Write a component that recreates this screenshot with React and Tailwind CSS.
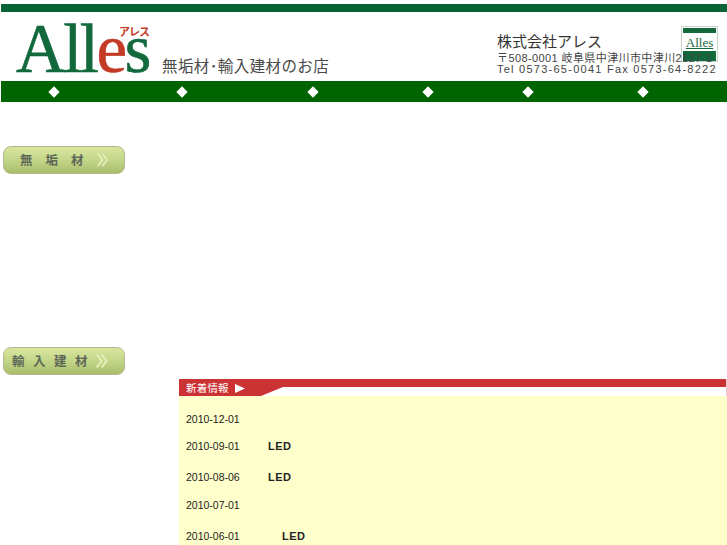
import React from 'react'

const jp = { fontFamily: '"Liberation Sans", "Noto Sans CJK JP", sans-serif' }

const Diamond = () => <span className="block w-[8px] h-[8px] rotate-45 bg-white" />

const SideButton = ({ chars, gap }) => (
  <div className={`w-[122px] h-[28px] ml-[3px] flex items-center rounded-[8px] border border-[#b5b98a] bg-gradient-to-b from-[#d9e6a0] via-[#c3d688] to-[#a9bd6c] ${gap}`}>
    {chars.map((c) => (
      <span key={c} className="pt-[2px] text-[12.5px] font-bold leading-none text-[#5f6858]">{c}</span>
    ))}
    <svg className="ml-auto mr-[15px]" width="16" height="18" viewBox="0 0 16 18" fill="none" stroke="#e2eeb8" strokeWidth="2.5">
      <path d="M1 1l6 8-6 8" />
      <path d="M7 1l6 8-6 8" />
    </svg>
  </div>
)

const NewsRow = ({ date, text, indent, height }) => (
  <div className={`flex items-center ${height}`}>
    <span className="w-[82px] text-[10.5px] leading-none text-[#222]">{date}</span>
    {text && <span className={`text-[11px] font-bold leading-none tracking-[0.5px] text-[#222] ${indent}`}>{text}</span>}
  </div>
)

export default function App() {
  return (
    <div className="w-[727px] h-[545px] overflow-hidden bg-white" style={jp}>
      {/* top band */}
      <div className="pt-[4px] pl-[1px]">
        <div className="h-[8px] bg-[#056334]" />
      </div>

      {/* header */}
      <div className="relative h-[69px] flex">
        <div className="relative w-[160px] h-[69px] shrink-0">
          <div className="pl-[16px] text-[#12693c] text-[69px] leading-[75px] tracking-[-2.6px] whitespace-nowrap [-webkit-text-stroke:0.6px_#12693c]" style={{ fontFamily: '"Liberation Serif", serif' }}>
            All<span className="text-[#c33a26] [-webkit-text-stroke:0.6px_#c33a26]">e</span>s
          </div>
          <span className="absolute left-[119px] top-[15px] text-[11px] leading-none font-bold text-[#c33a26] tracking-[-1px]">アレス</span>
        </div>
        <div className="self-end pb-[5px] pl-[2px] text-[15.5px] leading-[18px] tracking-[0.4px] text-[#4a4a4a] whitespace-nowrap">無垢材･輸入建材のお店</div>

        {/* small logo, the address runs over it */}
        <div className="absolute left-[681px] top-[14px] w-[37px] h-[36px] flex flex-col border border-[#c8d4c8] bg-white">
          <div className="h-[6px] m-[1px] bg-[#12693c]" />
          <div className="flex-1 text-center text-[13px] leading-[17px] underline text-[#12693c]" style={{ fontFamily: '"Liberation Serif", serif' }}>Alles</div>
          <div className="h-[11px] mx-[1px] bg-[#12693c]" />
        </div>

        <div className="relative ml-auto mr-[9px] pt-[21px] w-[221px] text-[#444]">
          <div className="text-[15px] leading-[18px] text-[#333] whitespace-nowrap">株式会社アレス</div>
          <div className="text-[11px] leading-[12px] tracking-[0.4px] whitespace-nowrap mt-[1px]">〒508-0001 岐阜県中津川市中津川2127-1</div>
          <div className="text-[11px] leading-[11px] tracking-[1.25px] whitespace-nowrap">Tel 0573-65-0041 Fax 0573-64-8222</div>
        </div>
      </div>

      {/* nav */}
      <div className="pl-[1px]">
        <div className="h-[21px] bg-[#006400] flex items-center">
          <div className="ml-[49px]"><Diamond /></div>
          <div className="ml-[120px]"><Diamond /></div>
          <div className="ml-[123px]"><Diamond /></div>
          <div className="ml-[107px]"><Diamond /></div>
          <div className="ml-[92px]"><Diamond /></div>
          <div className="ml-[107px]"><Diamond /></div>
        </div>
      </div>

      {/* body */}
      <div className="pt-[44px]">
        <SideButton chars={['無', '垢', '材']} gap="pl-[16px] gap-[13px]" />
      </div>
      <div className="pt-[173px]">
        <SideButton chars={['輸', '入', '建', '材']} gap="pl-[8px] gap-[8.5px]" />
      </div>

      {/* news */}
      <div className="ml-[179px] mt-[4px]">
        <div className="relative h-[17px] bg-white">
          <div className="h-[8px] bg-[#cb3233]" />
          <svg className="absolute left-0 top-0" width="110" height="17" viewBox="0 0 110 17">
            <polygon points="0,0 110,0 110,8 104,8 82,17 0,17" fill="#cb3233" />
          </svg>
          <span className="absolute left-[7px] top-[3px] text-[10.5px] leading-[13px] tracking-[0.2px] text-white whitespace-nowrap">新着情報</span>
          <svg className="absolute left-[56px] top-[5px]" width="10" height="9" viewBox="0 0 10 9"><polygon points="0,0 10,4.5 0,9" fill="#fff" /></svg>
          <div className="absolute right-0 top-0 w-[1px] h-[17px] bg-[#e8d0d0]" />
        </div>
        <div className="h-[150px] bg-[#ffffcc] pl-[7px] pt-[8px]">
          <NewsRow date="2010-12-01" height="h-[30px]" />
          <NewsRow date="2010-09-01" text="LED" height="h-[24px]" />
          <NewsRow date="2010-08-06" text="LED" height="h-[38px]" />
          <NewsRow date="2010-07-01" height="h-[18px]" />
          <NewsRow date="2010-06-01" text="LED" indent="ml-[14px]" height="h-[44px]" />
        </div>
      </div>
    </div>
  )
}
